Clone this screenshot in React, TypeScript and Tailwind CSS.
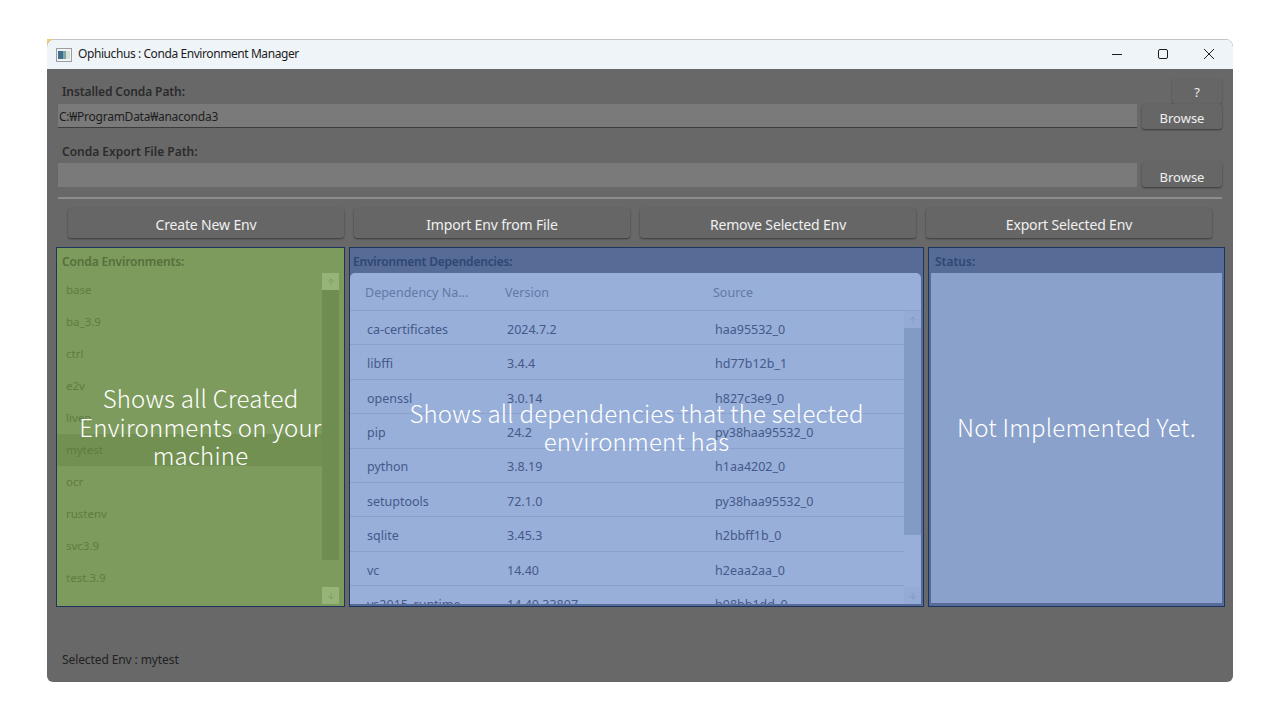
import { ArrowDown, ArrowUp } from "lucide-react";

const ENVS = ["base", "ba_3.9", "ctrl", "e2v", "liven", "mytest", "ocr", "rustenv", "svc3.9", "test.3.9"];

const DEPS = [
  ["ca-certificates", "2024.7.2", "haa95532_0"],
  ["libffi", "3.4.4", "hd77b12b_1"],
  ["openssl", "3.0.14", "h827c3e9_0"],
  ["pip", "24.2", "py38haa95532_0"],
  ["python", "3.8.19", "h1aa4202_0"],
  ["setuptools", "72.1.0", "py38haa95532_0"],
  ["sqlite", "3.45.3", "h2bbff1b_0"],
  ["vc", "14.40", "h2eaa2aa_0"],
  ["vs2015_runtime", "14.40.33807", "h98bb1dd_0"],
];

function DarkButton({ label, className }: { label: string; className: string }) {
  return (
    <button className={`flex items-center justify-center rounded-[3px] bg-[#666666] text-[#f0f0f0] shadow-[0_1px_2px_rgba(0,0,0,0.45)] ${className}`}>
      {label}
    </button>
  );
}

function Overlay({ children, className }: { children: React.ReactNode; className: string }) {
  return (
    <div className="pointer-events-none absolute inset-0 flex items-center justify-center">
      <p className={`text-center font-['Noto_Sans_CJK_KR',sans-serif] text-[24px] leading-[28.5px] font-light tracking-[0.2px] text-white ${className}`}>
        {children}
      </p>
    </div>
  );
}

function ScrollBar({ trackClass, buttonClass, iconClass, top, thumb }: { trackClass: string; buttonClass: string; iconClass: string; top: string; thumb: string }) {
  return (
    <div className={`flex flex-col justify-between ${top}`}>
      <div className="flex flex-col">
        <div className={`flex h-[17px] w-[17px] items-center justify-center ${buttonClass}`}>
          <ArrowUp size={10} strokeWidth={2} className={iconClass} />
        </div>
        <div className={`w-[17px] ${trackClass} ${thumb}`} />
      </div>
      <div className={`flex h-[17px] w-[17px] items-center justify-center ${buttonClass}`}>
        <ArrowDown size={10} strokeWidth={2} className={iconClass} />
      </div>
    </div>
  );
}

export default function App() {
  return (
    <div className="relative h-screen overflow-hidden bg-white pt-[39px] pl-[47px] font-['Noto_Sans',sans-serif]">
      {/* sliver of the yellow window behind the app, shows at the rounded corner */}
      <div className="absolute top-[39px] left-[47px] h-[8px] w-[16px] bg-[#f0cf6a]" />
      <div className="relative flex h-[643px] w-[1186px] flex-col overflow-hidden rounded-t-[8px] rounded-b-[6px] bg-[#686868]">
        {/* Title bar */}
        <div className="flex h-[30px] shrink-0 items-center justify-between border-t border-[#c4c4c4] bg-[#eff4f9] pl-[9px] text-[#1c1c1c]">
          <div className="flex items-center gap-[6px]">
            <svg width="16" height="14" viewBox="0 0 16 14">
              <rect x="0.5" y="0.5" width="15" height="13" fill="#f3f3f3" stroke="#9a9fa6" />
              <rect x="2" y="3" width="5" height="8" fill="#3f6f8f" />
              <rect x="7" y="3" width="3" height="8" fill="#7fa8a0" />
              <rect x="10" y="3" width="4" height="8" fill="#d9dfd9" />
            </svg>
            <span className="mb-[1px] text-[12px] tracking-[-0.42px]">Ophiuchus : Conda Environment Manager</span>
          </div>
          <div className="flex items-center pr-[1px]">
            <svg width="46" height="30" viewBox="0 0 46 30">
              <path d="M18 14.5h10" stroke="#1c1c1c" strokeWidth="1" />
            </svg>
            <svg width="46" height="30" viewBox="0 0 46 30">
              <rect x="18.5" y="9.5" width="9" height="9" rx="1.5" fill="none" stroke="#1c1c1c" />
            </svg>
            <svg width="46" height="30" viewBox="0 0 46 30">
              <path d="M18 9l10 10M28 9L18 19" stroke="#1c1c1c" strokeWidth="1" />
            </svg>
          </div>
        </div>

        {/* Body */}
        <div className="flex flex-1 flex-col pl-[9px]">
          <div className="mt-[10px] flex h-[25px] items-end justify-between pr-[11px]">
            <span className="mb-[3px] ml-[6px] text-[12px] font-semibold tracking-[-0.1px] text-[#2b2b2b]">Installed Conda Path:</span>
            <button className="flex h-[25px] w-[50px] items-center justify-center rounded-[3px] bg-[#666666] pt-[3px] text-[13px] text-[#f0f0f0] shadow-[0_1px_2px_rgba(0,0,0,0.3)]">?</button>
          </div>
          <div className="flex h-[25px] gap-[5px] pl-[2px]">
            <div className="flex h-[24px] w-[1079px] items-center border-b border-[#3c3c3c] bg-[#7a7a7a] pt-[2px] pl-[1px] text-[12px] tracking-[-0.25px] text-[#1e1e1e]">
              C:₩ProgramData₩anaconda3
            </div>
            <DarkButton label="Browse" className="h-[25px] w-[80px] pt-[4px] text-[13px]" />
          </div>
          <div className="mt-[14px] ml-[6px] h-[19px] text-[12px] leading-[18px] font-semibold text-[#2b2b2b]">Conda Export File Path:</div>
          <div className="flex h-[25px] gap-[5px] pl-[2px]">
            <div className="mt-[1px] h-[24px] w-[1079px] bg-[#7a7a7a]" />
            <DarkButton label="Browse" className="h-[25px] w-[80px] pt-[6px] text-[13px]" />
          </div>
          <div className="mt-[10px] ml-[2px] h-[2px] w-[1164px] bg-[#8c8c8c]" />
          <div className="mt-[9px] ml-[12px] flex gap-[10px]">
            <DarkButton label="Create New Env" className="h-[30px] w-[276px] pt-[3px] text-[14px] tracking-[-0.15px]" />
            <DarkButton label="Import Env from File" className="h-[30px] w-[276px] pt-[3px] text-[14px] tracking-[-0.15px]" />
            <DarkButton label="Remove Selected Env" className="h-[30px] w-[276px] pt-[3px] text-[14px] tracking-[-0.15px]" />
            <DarkButton label="Export Selected Env" className="h-[30px] w-[286px] pt-[3px] text-[14px] tracking-[-0.15px]" />
          </div>

          {/* Panels */}
          <div className="mt-[9px] flex h-[360px] gap-[4px]">
            {/* Conda environments */}
            <div className="relative w-[289px] border border-[#1d3460] bg-[#7d9b5c]">
              <div className="h-[25px] pl-[5px] text-[12px] leading-[27px] font-semibold tracking-[-0.15px] text-[#566f3c]">Conda Environments:</div>
              <div className="flex h-[331px] pr-[5px]">
                <div className="flex-1 pt-[1px]">
                  {ENVS.map((env) => (
                    <div key={env} className={`flex h-[32px] items-center pl-[9px] text-[11.5px] text-[#5f7b43] ${env === "mytest" ? "bg-[#729051]" : ""}`}>
                      {env}
                    </div>
                  ))}
                </div>
                <ScrollBar top="h-[331px]" trackClass="bg-[#6f8d50]" buttonClass="bg-[#97b478]" iconClass="text-[#7d9b5c]" thumb="h-[270px]" />
              </div>
              <Overlay className="w-[260px]">Shows all Created Environments on your machine</Overlay>
            </div>

            {/* Dependencies */}
            <div className="relative w-[575px] border border-[#1d3460] bg-[#566c96]">
              <div className="h-[25px] pl-[3px] text-[12px] leading-[27px] font-semibold tracking-[-0.2px] text-[#2f4674]">Environment Dependencies:</div>
              <div className="mr-[2px] flex h-[331px] flex-col overflow-hidden rounded-t-[5px] bg-[#98afd9]">
                <div className="flex h-[38px] shrink-0 items-center border-b border-[#8aa1cc] pt-[3px] pl-[15px] text-[12.5px] text-[#6379a6]">
                  <span className="w-[140px]">Dependency Na...</span>
                  <span className="w-[208px]">Version</span>
                  <span>Source</span>
                </div>
                <div className="flex min-h-0 flex-1">
                  <div className="flex-1 overflow-hidden">
                    {DEPS.map((row) => (
                      <div key={row[0]} className="flex h-[34.4px] shrink-0 items-center border-b border-[#8aa1cc] pt-[5px] pl-[17px] text-[12.5px] text-[#46598a]">
                        <span className="w-[140px]">{row[0]}</span>
                        <span className="w-[208px]">{row[1]}</span>
                        <span>{row[2]}</span>
                      </div>
                    ))}
                  </div>
                  <ScrollBar top="h-[293px]" trackClass="bg-[#829bc4]" buttonClass="bg-[#93abd5]" iconClass="text-[#7f97c3]" thumb="h-[207px]" />
                </div>
              </div>
              <Overlay className="w-[490px]">Shows all dependencies that the selected environment has</Overlay>
            </div>

            {/* Status */}
            <div className="relative w-[297px] border border-[#1d3460] bg-[#566c96]">
              <div className="h-[25px] pl-[6px] text-[12px] leading-[27px] font-semibold text-[#2f4674]">Status:</div>
              <div className="mx-[2px] h-[330px] bg-[#8aa1cb]" />
              <Overlay className="w-[270px]">Not Implemented Yet.</Overlay>
            </div>
          </div>

          <div className="mt-[44px] ml-[6px] text-[12px] tracking-[-0.1px] text-[#222222]">Selected Env : mytest</div>
        </div>
      </div>
    </div>
  );
}
